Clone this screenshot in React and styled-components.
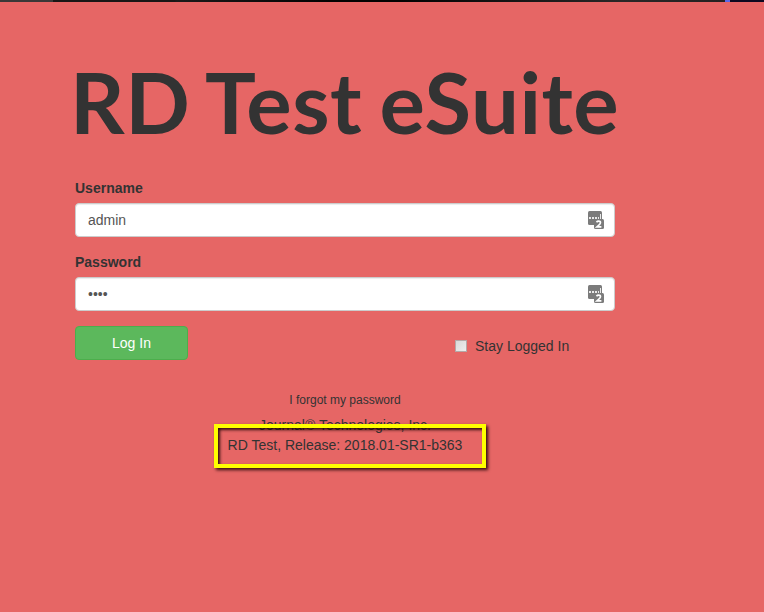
import React from 'react';
import styled, { createGlobalStyle } from 'styled-components';

const GlobalStyle = createGlobalStyle`
  *, *::before, *::after { box-sizing: border-box; }
  html { background: #e66665; }
  body {
    margin: 0;
    background: #e66665;
    color: #333;
    font: 14px/20px "Liberation Sans", Arial, sans-serif;
    overflow: hidden;
  }
`;

const Page = styled.div`
  height: 612px;
  background: #e66665;
`;

const BrowserEdge = styled.div`
  height: 2px;
  background: linear-gradient(
    90deg,
    #3a3838 0 53px, #191616 53px 175px, #1c1a1a 176px, #030202 330px,
    #030202 400px, #2a2727 620px, #242121 725px, #5a68e8 725px 730px, #0d0920 730px
  );
`;

const LoginForm = styled.form`
  width: 540px;
  margin-left: 75px;
  padding-top: 53px;
`;

const Title = styled.h1`
  margin: 0 0 31px -5px;
  height: 92px;
  font: 700 85px/92px Lato, sans-serif;
  letter-spacing: 0.5px;
  word-spacing: -3.8px;
  white-space: nowrap;
`;

const Field = styled.div`
  margin-bottom: 15px;
`;

const Label = styled.label`
  display: block;
  margin-bottom: 5px;
  font-weight: 700;
`;

const InputFrame = styled.div`
  display: flex;
  align-items: center;
  height: 34px;
  padding: 0 10px 0 12px;
  background: #fff;
  border: 1px solid #ccc;
  border-radius: 4px;
  box-shadow: inset 0 1px 1px rgba(0, 0, 0, 0.075);
`;

const Input = styled.input`
  flex: 1;
  min-width: 0;
  height: 32px;
  padding: 0;
  border: 0;
  outline: 0;
  background: transparent;
  color: #555;
  font: inherit;
`;

const Actions = styled.div`
  display: flex;
  align-items: flex-start;
`;

const LoginButton = styled.button`
  width: 113px;
  height: 34px;
  padding: 0;
  border: 1px solid #4cae4c;
  border-radius: 4px;
  background: #5cb85c;
  color: #fff;
  font: inherit;
`;

const StayLoggedIn = styled.label`
  display: flex;
  align-items: center;
  gap: 8px;
  margin: 10px 0 0 267px;
`;

const Checkbox = styled.input`
  appearance: none;
  width: 12px;
  height: 12px;
  margin: 0;
  border: 1px solid #b5a9a8;
  background: linear-gradient(135deg, #d9d9d9, #eee);
`;

const Footer = styled.footer`
  display: flex;
  flex-direction: column;
  align-items: center;
  margin-top: 30px;
`;

const ForgotLink = styled.a`
  margin-bottom: 5px;
  font-size: 12px;
`;

const Release = styled.div`
  position: relative;
`;

const Highlight = styled.div`
  position: absolute;
  top: -11px;
  left: -14px;
  width: 272px;
  height: 44px;
  border: 4px solid #ff0;
  box-shadow: 2px 2px 3px rgba(20, 0, 0, 0.85), inset 2px 2px 3px rgba(20, 0, 0, 0.85);
`;

function PasswordManagerIcon() {
  return (
    <svg width="17" height="20" viewBox="0 0 17 20" aria-hidden="true">
      <rect x="1" y="1" width="14" height="14" rx="1.5" fill="#7b7b7b" />
      <path d="M2 7h2v2H2zM5 7h2v2H5zM8 7h2v2H8zM11 7h1v2h-1zM13 4h1v5h-1z" fill="#e8e8e8" />
      <rect x="7" y="9" width="10" height="10" rx="1.5" fill="#7b7b7b" />
      <path d="M9.5 12.2Q10.2 11.1 11.7 11.1Q13.5 11.1 13.5 12.7Q13.5 13.8 11.6 15.3L9.8 16.9H14.4" fill="none" stroke="#fff" strokeWidth="1.6" />
    </svg>
  );
}

function CredentialField({ label, ...input }) {
  return (
    <Field>
      <Label htmlFor={input.id}>{label}</Label>
      <InputFrame>
        <Input {...input} />
        <PasswordManagerIcon />
      </InputFrame>
    </Field>
  );
}

export default function App() {
  return (
    <Page>
      <GlobalStyle />
      <BrowserEdge />
      <LoginForm onSubmit={(e) => e.preventDefault()}>
        <Title>RD Test eSuite</Title>
        <CredentialField label="Username" id="username" type="text" defaultValue="admin" />
        <CredentialField label="Password" id="password" type="password" defaultValue="demo" />
        <Actions>
          <LoginButton type="submit">Log In</LoginButton>
          <StayLoggedIn>
            <Checkbox type="checkbox" />
            Stay Logged In
          </StayLoggedIn>
        </Actions>
        <Footer>
          <ForgotLink>I forgot my password</ForgotLink>
          <div>Journal® Technologies, Inc.</div>
          <Release>
            RD Test, Release: 2018.01-SR1-b363
            <Highlight />
          </Release>
        </Footer>
      </LoginForm>
    </Page>
  );
}
